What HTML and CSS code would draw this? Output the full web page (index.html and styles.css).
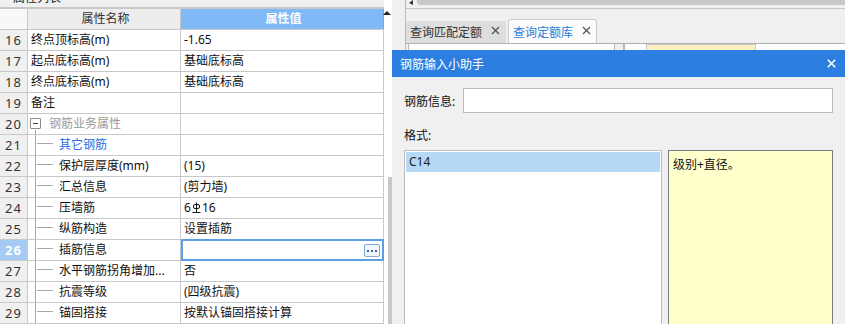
FILE: index.html
```html
<!DOCTYPE html>
<html lang="zh-CN">
<head>
    <meta charset="UTF-8">
    <title>属性列表</title>
    <link rel="stylesheet" href="styles.css">
</head>
<body>
<div class="page">
    <section class="props">
        <div class="props-title"><span>属性列表</span></div>
        <div class="row head">
            <div class="num"></div>
            <div class="name">属性名称</div>
            <div class="val">属性值</div>
        </div>
        <div class="row"><div class="num">16</div><div class="name">终点顶标高(m)</div><div class="val">-1.65</div></div>
        <div class="row"><div class="num">17</div><div class="name">起点底标高(m)</div><div class="val">基础底标高</div></div>
        <div class="row"><div class="num">18</div><div class="name">终点底标高(m)</div><div class="val">基础底标高</div></div>
        <div class="row"><div class="num">19</div><div class="name">备注</div><div class="val"></div></div>
        <div class="row"><div class="num">20</div><div class="name group"><span class="fold"></span>钢筋业务属性</div><div class="val"></div></div>
        <div class="row"><div class="num">21</div><div class="name child link">其它钢筋</div><div class="val"></div></div>
        <div class="row"><div class="num">22</div><div class="name child">保护层厚度(mm)</div><div class="val">(15)</div></div>
        <div class="row"><div class="num">23</div><div class="name child">汇总信息</div><div class="val">(剪力墙)</div></div>
        <div class="row"><div class="num">24</div><div class="name child">压墙筋</div><div class="val">6<svg class="grade" width="9" height="11" viewBox="0 0 9 11"><rect x="1.5" y="2.5" width="6" height="4" rx="1.5" fill="none" stroke="#111"/><path d="M4.5 0.5V10.5M0.5 10.5H8.5" stroke="#111" fill="none"/></svg>16</div></div>
        <div class="row"><div class="num">25</div><div class="name child">纵筋构造</div><div class="val">设置插筋</div></div>
        <div class="row current"><div class="num">26</div><div class="name child">插筋信息</div><div class="val editing"><span class="more"><svg width="14" height="11" viewBox="0 0 14 11"><rect x="2" y="5" width="2" height="2" fill="#3f6a9c"/><rect x="6" y="5" width="2" height="2" fill="#3f6a9c"/><rect x="10" y="5" width="2" height="2" fill="#3f6a9c"/></svg></span></div></div>
        <div class="row"><div class="num">27</div><div class="name child">水平钢筋拐角增加...</div><div class="val">否</div></div>
        <div class="row"><div class="num">28</div><div class="name child">抗震等级</div><div class="val">(四级抗震)</div></div>
        <div class="row"><div class="num">29</div><div class="name child">锚固搭接</div><div class="val">按默认锚固搭接计算</div></div>
    </section>

    <div class="vscroll">
        <span class="arrow-up"></span>
        <span class="track"></span>
        <span class="thumb"></span>
    </div>
    <div class="splitter"></div>

    <section class="query">
        <div class="hscroll"><span class="arrow-left"></span><span class="hthumb"></span></div>
        <div class="tabs">
            <div class="tab">查询匹配定额<svg class="tab-close" width="9" height="9" viewBox="0 0 9 9"><path d="M1 1L8 8M8 1L1 8" stroke="#555" stroke-width="1.3"/></svg></div>
            <div class="tab active">查询定额库<svg class="tab-close" width="9" height="9" viewBox="0 0 9 9"><path d="M1 1L8 8M8 1L1 8" stroke="#555" stroke-width="1.3"/></svg></div>
        </div>
        <div class="tab-body">
            <div class="pane-a"></div>
            <div class="pane-b"><div class="pane-cell"></div></div>
        </div>
    </section>

    <div class="dialog">
        <div class="dialog-title">
            <span>钢筋输入小助手</span>
            <svg width="9" height="9" viewBox="0 0 9 9"><path d="M0.8 0.8L8.2 8.2M8.2 0.8L0.8 8.2" stroke="#fff" stroke-width="1.6"/></svg>
        </div>
        <div class="dialog-body">
            <div class="field">
                <label for="rebarInfo">钢筋信息:</label>
                <input type="text" id="rebarInfo">
            </div>
            <div class="format-label">格式:</div>
            <div class="format">
                <div class="format-list">
                    <div class="format-item selected">C14</div>
                </div>
                <div class="format-hint">级别+直径。</div>
            </div>
        </div>
    </div>
</div>
</body>
</html>
```

FILE: styles.css
```css
html, body {
    margin: 0;
    padding: 0;
    overflow: hidden;
}
body {
    font-family: "Noto Sans", "Noto Sans CJK SC", sans-serif;
    font-size: 12px;
    color: #111;
    background-color: #f0f0f0;
}
.page {
    position: relative;
    display: flex;
    width: 845px;
    height: 324px;
    overflow: hidden;
}

/* property grid */
.props {
    width: 384px;
    flex: none;
    display: flex;
    flex-direction: column;
    background-color: #fff;
}
.props-title {
    height: 7px;
    border-bottom: 2px solid #c8c8c8;
    background-color: #f0f0f0;
    padding-left: 13px;
    overflow: hidden;
}
.props-title span {
    display: block;
    line-height: 12px;
    margin-top: -8px;
    color: #222;
}
.row {
    display: flex;
    height: 21px;
    box-sizing: border-box;
    border-bottom: 1px solid #c8c8c8;
    line-height: 20px;
    white-space: nowrap;
}
.num {
    width: 28px;
    flex: none;
    box-sizing: border-box;
    border-right: 1px solid #c8c8c8;
    background-color: #f0f0f0;
    text-align: center;
    font-size: 13px;
    letter-spacing: 1px;
    color: #333;
}
.name {
    width: 153px;
    flex: none;
    box-sizing: border-box;
    border-right: 1px solid #c8c8c8;
    padding-left: 3px;
    overflow: hidden;
}
.val {
    width: 203px;
    flex: none;
    box-sizing: border-box;
    border-right: 1px solid #c8c8c8;
    padding-left: 3px;
    overflow: hidden;
}
.head .num {
    background-color: #f8f8f8;
}
.head .name {
    background-color: #ededed;
    text-align: center;
    color: #333;
}
.head .val {
    background-color: #7fbaf6;
    border-right-color: #6aa8ea;
    text-align: center;
    font-weight: bold;
    color: #fff;
}
.name.group {
    padding-left: 2px;
    color: #9a9a9a;
    background: linear-gradient(#a8a8a8, #a8a8a8) 7px 16px / 1px 100% no-repeat;
}
.fold {
    display: inline-block;
    width: 11px;
    height: 11px;
    box-sizing: border-box;
    border: 1px solid #8a8a8a;
    border-radius: 1px;
    margin-right: 8px;
    vertical-align: -1px;
    background: linear-gradient(#444, #444) center / 5px 1px no-repeat, #fff;
}
.name.child {
    padding-left: 31px;
    background:
        linear-gradient(#a8a8a8, #a8a8a8) 7px 0 / 1px 100% no-repeat,
        linear-gradient(#a8a8a8, #a8a8a8) 9px 8px / 16px 1px no-repeat;
}
.name.link {
    color: #2e6be0;
}
.grade {
    vertical-align: -1px;
    margin: 0 1px;
}
.current .num {
    background-color: #a5cbf3;
    color: #fff;
    font-weight: bold;
}
.val.editing {
    margin: -1px 0;
    border: 2px solid #5d9fe6;
    display: flex;
    align-items: center;
    justify-content: flex-end;
    padding-right: 2px;
}
.more {
    display: flex;
    width: 16px;
    height: 13px;
    box-sizing: border-box;
    border: 1px solid #7fa9d9;
    border-radius: 2px;
    background-color: #f1f6fc;
    align-items: center;
    justify-content: center;
}
.more svg {
    display: block;
}

/* scrollbar beside the grid */
.vscroll {
    width: 8px;
    flex: none;
    display: flex;
    flex-direction: column;
    align-items: flex-end;
    background-color: #fff;
}
.arrow-up {
    margin: 11px 1px 0 0;
    width: 0;
    height: 0;
    border-left: 4px solid transparent;
    border-right: 4px solid transparent;
    border-bottom: 4px solid #222;
}
.track {
    flex: 1;
}
.thumb {
    width: 4px;
    height: 147px;
    background-color: #c8c8c8;
}
.splitter {
    width: 13px;
    flex: none;
    background-color: #f0f0f0;
}

/* query panel behind the dialog */
.query {
    flex: 1;
    display: flex;
    flex-direction: column;
    border-left: 1px solid #b8b8b8;
}
.hscroll {
    display: flex;
    height: 5px;
    padding-bottom: 3px;
    border-bottom: 1px solid #c4c4c4;
}
.arrow-left {
    width: 0;
    height: 0;
    margin: 0 4px 0 3px;
    border-top: 3px solid transparent;
    border-bottom: 2px solid transparent;
    border-right: 4px solid #333;
}
.hthumb {
    flex: 1;
    background-color: #c8c8c8;
    border-radius: 0 0 0 3px;
}
.tabs {
    display: flex;
    align-items: flex-end;
    gap: 2px;
    height: 24px;
    padding-top: 10px;
}
.tab {
    display: flex;
    align-items: center;
    height: 22px;
    width: 100px;
    box-sizing: border-box;
    padding-left: 4px;
    background-color: #dedede;
    border-radius: 3px 0 0 0;
    color: #333;
}
.tab.active {
    width: 89px;
    height: 24px;
    background-color: #fcfcfc;
    border: 1px solid #c8c8c8;
    border-bottom: none;
    border-radius: 3px 3px 0 0;
    color: #2b7bd8;
}
.tab-close {
    display: block;
    margin-left: 9px;
    margin-top: -3px;
}
.tab-body {
    display: flex;
    height: 7px;
    border-top: 1px solid #b0b0b0;
}
.pane-a {
    width: 205px;
    margin-left: 2px;
    background-color: #fff;
    border-left: 1px solid #b8b8b8;
    border-right: 1px solid #b8b8b8;
}
.pane-b {
    flex: 1;
    margin-left: 8px;
    border-left: 2px solid #b8b8b8;
    background-color: #fff;
    padding-left: 21px;
}
.pane-cell {
    width: 110px;
    height: 100%;
    box-sizing: border-box;
    background-color: #fcefc0;
    border: 1px solid #c8c8c8;
    border-bottom: none;
}

/* rebar input helper */
.dialog {
    position: absolute;
    left: 392px;
    top: 50px;
    width: 453px;
    height: 300px;
    background-color: #f0f0f0;
}
.dialog-title {
    display: flex;
    align-items: center;
    justify-content: space-between;
    height: 27px;
    padding: 0 9px 0 8px;
    background-color: #2c7fe0;
    color: #fff;
}
.dialog-title svg {
    display: block;
}
.dialog-body {
    padding: 11px 12px 0 12px;
}
.field {
    display: flex;
    align-items: center;
}
.field label {
    width: 59px;
    flex: none;
}
.field input {
    flex: 1;
    height: 25px;
    box-sizing: border-box;
    margin: 0;
    border: 1px solid #bcbcbc;
    background-color: #fff;
    outline: none;
}
.format-label {
    margin-top: 15px;
    line-height: 16px;
}
.format {
    display: flex;
    gap: 6px;
    margin-top: 6px;
}
.format-list {
    width: 258px;
    height: 200px;
    box-sizing: border-box;
    padding: 1px;
    border: 1px solid #bcbcbc;
    background-color: #fff;
}
.format-item {
    height: 20px;
    line-height: 20px;
    padding-left: 3px;
    color: #222;
}
.format-item.selected {
    background-color: #b5d9f5;
}
.format-hint {
    flex: 1;
    height: 200px;
    box-sizing: border-box;
    padding: 5px 4px;
    line-height: 18px;
    border: 1px solid #7c7c7c;
    background-color: #ffffcc;
}
```
